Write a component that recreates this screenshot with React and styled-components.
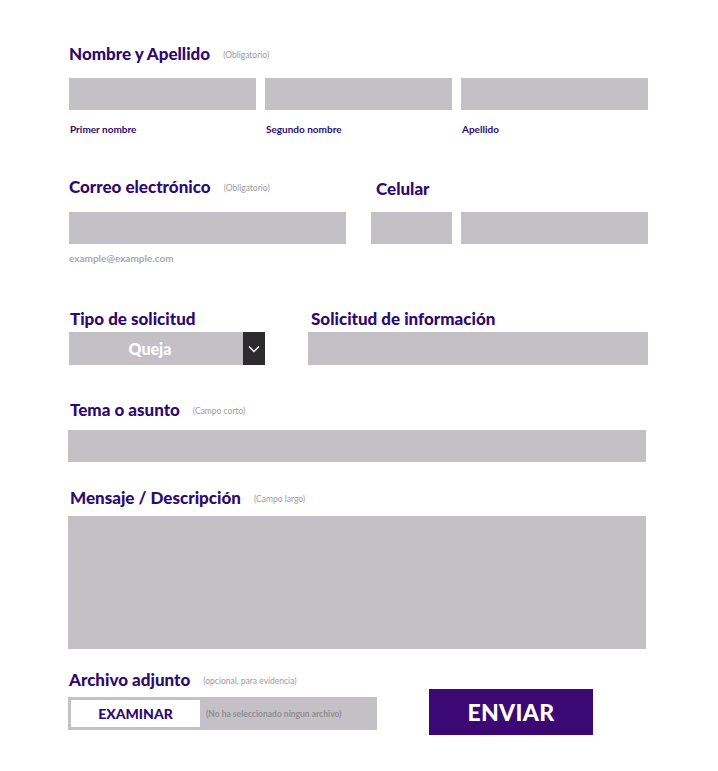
import React from 'react'
import styled, { createGlobalStyle } from 'styled-components';

const GlobalStyle = createGlobalStyle`
  body {
    margin: 0;
    background: #ffffff;
    font-family: Lato, "Open Sans", Arial, sans-serif;
  }
`;

const purple = '#2e0a6c';
const field = '#c3c1c5';

const Page = styled.div`
  width: 718px;
  height: 771px;
  box-sizing: border-box;
  padding: 44px 0 0 69px;
`;

const Form = styled.form`
  width: 579px;
  display: flex;
  flex-direction: column;
`;

const Section = styled.div`
  margin-top: ${p => p.$top || 0}px;
`;

const Row = styled.div`
  display: grid;
  grid-template-columns: ${p => p.$cols};
  column-gap: ${p => p.$gap || 9}px;
`;

const Heading = styled.div`
  height: 20px;
  line-height: 20px;
  font-size: 17px;
  font-weight: 900;
  color: ${purple};
  white-space: nowrap;
  padding-left: ${p => p.$indent || 0}px;
  margin-top: ${p => p.$top || 0}px;
  margin-bottom: ${p => p.$gap || 0}px;
`;

const Note = styled.span`
  font-size: 8.5px;
  font-weight: 400;
  color: #9c9a9f;
  margin-left: 9px;
  vertical-align: 2px;
`;

const Input = styled.div`
  height: ${p => p.$h || 32}px;
  background: ${field};
  margin-left: ${p => p.$shift || 0}px;
  margin-right: ${p => p.$trim || 0}px;
`;

const SubLabel = styled.div`
  margin-top: 13px;
  height: 12px;
  line-height: 12px;
  font-size: 10px;
  font-weight: 700;
  color: ${purple};
  padding-left: ${p => p.$indent || 1}px;
`;

const Hint = styled.div`
  margin-top: 8px;
  height: 12px;
  line-height: 12px;
  font-size: 10px;
  font-weight: 700;
  color: #aaa8ac;
`;

const Select = styled.div`
  height: 33px;
  display: flex;
  background: ${field};
`;

const SelectValue = styled.div`
  flex: 1;
  display: flex;
  align-items: center;
  justify-content: center;
  color: #ffffff;
  font-size: 16px;
  font-weight: 900;
  padding-right: 12px;
`;

const SelectArrow = styled.div`
  width: 22px;
  background: #2d2b2e;
  display: flex;
  align-items: center;
  justify-content: center;
`;

const FileRow = styled.div`
  display: flex;
  align-items: flex-start;
  gap: 52px;
  margin-top: -1px;
  margin-left: -1px;
`;

const FileBox = styled.div`
  width: 303px;
  height: 27px;
  margin-top: 8px;
  padding: 3px;
  background: ${field};
  display: flex;
  align-items: center;
`;

const Browse = styled.div`
  width: 129px;
  height: 100%;
  background: #ffffff;
  color: ${purple};
  font-size: 14px;
  font-weight: 900;
  display: flex;
  align-items: center;
  justify-content: center;
`;

const FileText = styled.div`
  margin-left: 6px;
  font-size: 8.5px;
  font-weight: 700;
  color: #8f8d92;
`;

const Submit = styled.button`
  width: 164px;
  height: 46px;
  border: none;
  background: #3b0874;
  color: #ffffff;
  font-family: inherit;
  font-size: 23px;
  font-weight: 900;
  letter-spacing: 0.3px;
  padding: 0;
`;

const App = () => {
    return (
        <Page>
            <GlobalStyle />
            <Form>
                <Section>
                    <Heading $gap={14}>Nombre y Apellido <Note>(Obligatorio)</Note></Heading>
                    <Row $cols="187px 187px 187px">
                        <div>
                            <Input />
                            <SubLabel>Primer nombre</SubLabel>
                        </div>
                        <div>
                            <Input />
                            <SubLabel>Segundo nombre</SubLabel>
                        </div>
                        <div>
                            <Input />
                            <SubLabel>Apellido</SubLabel>
                        </div>
                    </Row>
                </Section>

                <Section $top={42}>
                    <Row $cols="277px 277px" $gap={25}>
                        <div>
                            <Heading $gap={15}>Correo electrónico <Note>(Obligatorio)</Note></Heading>
                            <Input />
                            <Hint>example@example.com</Hint>
                        </div>
                        <div>
                            <Heading $indent={5} $top={2} $gap={13}>Celular</Heading>
                            <Row $cols="81px 187px">
                                <Input />
                                <Input />
                            </Row>
                        </div>
                    </Row>
                </Section>

                <Section $top={45}>
                    <Row $cols="196px 340px" $gap={43}>
                        <div>
                            <Heading $indent={1} $gap={3}>Tipo de solicitud</Heading>
                            <Select>
                                <SelectValue>Queja</SelectValue>
                                <SelectArrow>
                                    <svg width="12" height="8" viewBox="0 0 12 8">
                                        <path d="M1 1.5 L6 6.5 L11 1.5" fill="none" stroke="#ffffff" strokeWidth="1.3" />
                                    </svg>
                                </SelectArrow>
                            </Select>
                        </div>
                        <div>
                            <Heading $indent={3} $gap={3}>Solicitud de información</Heading>
                            <Input $h={33} />
                        </div>
                    </Row>
                </Section>

                <Section $top={35}>
                    <Heading $indent={1} $gap={10}>Tema o asunto <Note>(Campo corto)</Note></Heading>
                    <Input $shift={-1} $trim={2} />
                </Section>

                <Section $top={26}>
                    <Heading $indent={1} $gap={8}>Mensaje / Descripción <Note>(Campo largo)</Note></Heading>
                    <Input $shift={-1} $trim={2} $h={133} />
                </Section>

                <Section $top={21}>
                    <Heading>Archivo adjunto <Note>(opcional, para evidencia)</Note></Heading>
                    <FileRow>
                        <FileBox>
                            <Browse>EXAMINAR</Browse>
                            <FileText>(No ha seleccionado ningun archivo)</FileText>
                        </FileBox>
                        <Submit type="submit">ENVIAR</Submit>
                    </FileRow>
                </Section>
            </Form>
        </Page>
    )
}

export default App
